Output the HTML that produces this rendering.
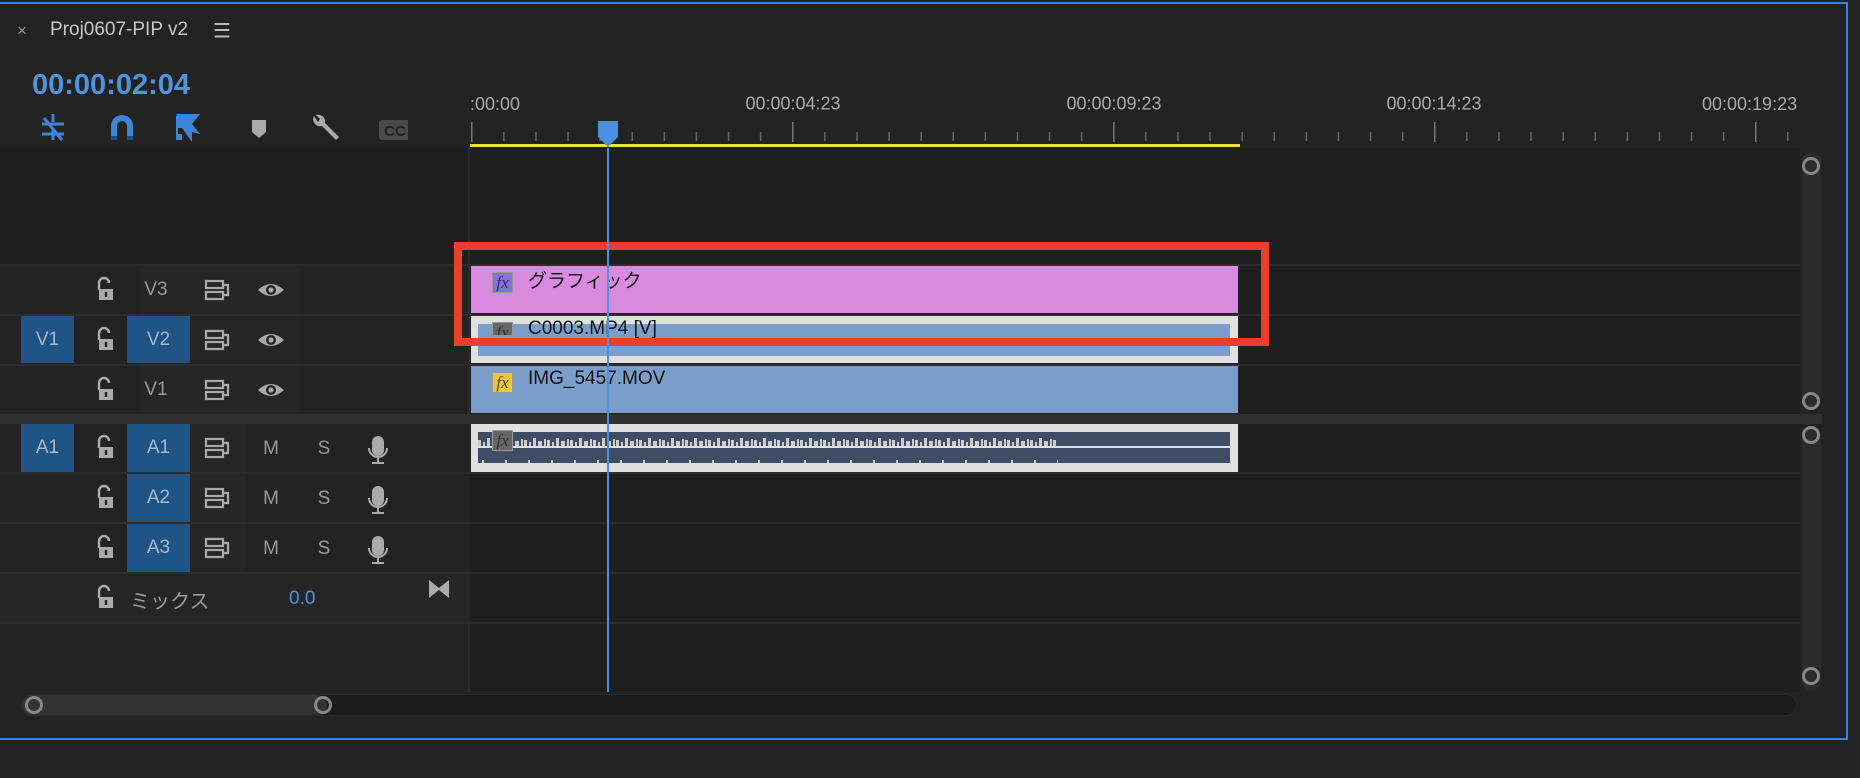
<!DOCTYPE html><html><head><meta charset="utf-8"><style>
*{margin:0;padding:0;box-sizing:border-box}
body{width:1860px;height:778px;background:#232323;position:relative;overflow:hidden;font-family:"Liberation Sans","Noto Sans CJK JP",sans-serif;color:#aaa}
.a{position:absolute}
.lbl{position:absolute;font-size:19px;color:#9a9a9a;transform:translate(-50%,-50%);white-space:nowrap}
.box{position:absolute;background:#1f5487;color:#aab8c8;font-size:19px;display:flex;align-items:center;justify-content:center}
.row{position:absolute;left:0;width:1800px;height:2px;background:#2c2c2c}
.fx{position:absolute;width:21px;height:21px;font-size:17px;font-style:italic;display:flex;align-items:center;justify-content:center;border:1px solid #999;font-family:"Liberation Serif",serif}
.cl{position:absolute;font-size:19px;color:#111}
.circ{position:absolute;width:18px;height:18px;border:3px solid #888;border-radius:50%}
</style></head><body>
<div class="a" style="left:0;top:2px;width:1848px;height:738px;border:2px solid #3d7fd0;border-left:none;"></div>
<div class="a" style="left:0;top:4px;width:1846px;height:734px;background:#232323"></div>
<div class="lbl" style="left:22px;top:31px;font-size:17px">×</div>
<div class="a" style="left:50px;top:19px;font-size:19px;color:#c8c8c8">Proj0607-PIP v2</div>
<div class="lbl" style="left:222px;top:31px;font-size:20px;color:#bbb">☰</div>
<div class="a" style="left:32px;top:69px;font-size:29px;font-weight:bold;color:#4d94dd">00:00:02:04</div>
<!-- toolbar icons -->
<svg class="a" style="left:38px;top:112px" width="370" height="32">
<g stroke="#3b86d9" stroke-width="3" fill="none"><path d="M15 2v8M4 12h22M4 22h22M6 6l18 22M15 18v10"/></g>
<path d="M73 28V14a11 11 0 0 1 22 0v14h-6V14a5 5 0 0 0-10 0v14z" fill="#3b86d9"/>
<rect x="73" y="24" width="6" height="4" fill="#1c4f88"/><rect x="89" y="24" width="6" height="4" fill="#1c4f88"/>
<path d="M138 2h24l-8 10 8 10-8-2v10l-10-14z" fill="#3b86d9"/><rect x="138" y="4" width="6" height="24" fill="#3b86d9"/><rect x="140" y="16" width="4" height="6" fill="#232323"/>
<path d="M214 8h14v12l-7 6-7-6z" fill="#aaa"/>
<path d="M276 4a7 7 0 0 0 8 10l14 14 3-3-14-14a7 7 0 0 0-9-8l4 4-2 3z" fill="#aaa"/>
<rect x="341" y="8" width="32" height="20" rx="3" fill="#4a4a4a"/><text x="357" y="24" font-size="15" font-weight="bold" fill="#232323" text-anchor="middle" font-family="Liberation Sans">CC</text>
</svg>
<!-- ruler -->
<div class="a" style="left:470px;top:94px;font-size:18px;color:#aaa">:00:00</div>
<div class="lbl" style="left:793px;top:104px;font-size:18px;color:#aaa">00:00:04:23</div>
<div class="lbl" style="left:1114px;top:104px;font-size:18px;color:#aaa">00:00:09:23</div>
<div class="lbl" style="left:1434px;top:104px;font-size:18px;color:#aaa">00:00:14:23</div>
<div class="a" style="left:1702px;top:94px;font-size:18px;color:#aaa;width:97px;overflow:hidden;white-space:nowrap">00:00:19:23</div>
<svg class="a" style="left:468px;top:118px" width="1332" height="32">
<defs><pattern id="t" x="3" y="0" width="32.1" height="32" patternUnits="userSpaceOnUse"><rect x="0" y="14" width="1.5" height="9" fill="#666"/></pattern></defs>
<rect x="0" y="0" width="1332" height="24" fill="url(#t)"/>
<g fill="#777"><rect x="3" y="4" width="1.5" height="20"/><rect x="324" y="4" width="1.5" height="20"/><rect x="645" y="4" width="1.5" height="20"/><rect x="966" y="4" width="1.5" height="20"/><rect x="1287" y="4" width="1.5" height="20"/></g>
<rect x="2" y="26" width="770" height="3" fill="#e8e03c"/>
</svg>
<!-- dark areas -->
<div class="a" style="left:0;top:148px;width:1800px;height:117px;background:#1e1e1e"></div>
<div class="a" style="left:470px;top:148px;width:1330px;height:544px;background:#1f1f1f"></div>
<div class="a" style="left:468px;top:148px;width:2px;height:544px;background:#2c2c2c"></div>
<div class="a" style="left:0;top:266px;width:300px;height:148px;background:#262626"></div>
<div class="a" style="left:0;top:424px;width:300px;height:150px;background:#262626"></div>
<div class="a" style="left:0;top:266px;width:140px;height:148px;background:#232323"></div>
<div class="a" style="left:0;top:424px;width:140px;height:150px;background:#232323"></div>
<div class="a" style="left:245px;top:424px;width:225px;height:150px;background:#232323"></div>
<div class="a" style="left:0;top:574px;width:470px;height:50px;background:#262626"></div>
<div class="row" style="top:264px"></div><div class="row" style="top:314px"></div><div class="row" style="top:364px"></div>
<div class="a" style="left:0;top:414px;width:1822px;height:10px;background:#303030"></div>
<div class="row" style="top:472px"></div><div class="row" style="top:522px"></div><div class="row" style="top:572px"></div><div class="row" style="top:622px"></div>
<!-- headers -->
<div class="box" style="left:21px;top:316px;width:53px;height:47px">V1</div>
<div class="box" style="left:127px;top:316px;width:63px;height:47px">V2</div>
<div class="lbl" style="left:156px;top:290px">V3</div>
<div class="lbl" style="left:156px;top:390px">V1</div>
<div class="box" style="left:21px;top:424px;width:53px;height:48px">A1</div>
<div class="box" style="left:127px;top:424px;width:63px;height:48px">A1</div>
<div class="box" style="left:127px;top:474px;width:63px;height:48px">A2</div>
<div class="box" style="left:127px;top:524px;width:63px;height:48px">A3</div>
<svg class="a" style="left:0;top:260px" width="470" height="360">
<defs>
<g id="lk"><path d="M-5 0v-7a5 5 0 0 1 10 0" stroke="#aaa" stroke-width="2.5" fill="none" transform="translate(-2,0)"/><rect x="-7" y="-1" width="14" height="11" fill="#aaa"/><rect x="-1.2" y="2" width="2.4" height="5" fill="#232323"/></g>
<g id="sy" fill="none" stroke="#aaa" stroke-width="2.2"><rect x="-11" y="-9" width="17" height="7"/><rect x="-11" y="2" width="17" height="7"/><path d="M6 -5h5v10h-5"/></g>
<g id="ey"><path d="M-13 0q13-12 26 0q-13 12-26 0z" fill="#aaa"/><circle r="5" fill="#262626"/><circle r="2.6" fill="#aaa"/></g>
<g id="mc"><rect x="-6" y="-14" width="12" height="20" rx="6" fill="#aaa"/><path d="M-9 -2a9 9 0 0 0 18 0M0 7v6M-6 13h12" stroke="#aaa" stroke-width="2" fill="none"/></g>
</defs>
<use href="#lk" x="106" y="30"/><use href="#lk" x="106" y="80"/><use href="#lk" x="106" y="130"/>
<use href="#lk" x="106" y="188"/><use href="#lk" x="106" y="238"/><use href="#lk" x="106" y="288"/><use href="#lk" x="106" y="338"/>
<use href="#sy" x="217" y="30"/><use href="#sy" x="217" y="80"/><use href="#sy" x="217" y="130"/>
<use href="#sy" x="217" y="188"/><use href="#sy" x="217" y="238"/><use href="#sy" x="217" y="288"/>
<use href="#ey" x="271" y="30"/><use href="#ey" x="271" y="80"/><use href="#ey" x="271" y="130"/>
<use href="#mc" x="378" y="190"/><use href="#mc" x="378" y="240"/><use href="#mc" x="378" y="290"/>
<path d="M429 320l10 8 10-8v18l-10-8-10 8z" fill="#aaa"/>
</svg>
<div class="lbl" style="left:271px;top:449px">M</div><div class="lbl" style="left:271px;top:499px">M</div><div class="lbl" style="left:271px;top:549px">M</div>
<div class="lbl" style="left:324px;top:449px">S</div><div class="lbl" style="left:324px;top:499px">S</div><div class="lbl" style="left:324px;top:549px">S</div>
<div class="a" style="left:130px;top:585px;font-size:20px;color:#9a9a9a">ミックス</div>
<div class="a" style="left:289px;top:588px;font-size:19px;color:#4d94dd">0.0</div>
<!-- clips -->
<div class="a" style="left:471px;top:266px;width:767px;height:47px;background:#d88ade"></div>
<div class="fx" style="left:492px;top:272px;background:#8a6fd6;color:#3a2a70">fx</div>
<div class="cl" style="left:528px;top:266px">グラフィック</div>
<div class="a" style="left:471px;top:316px;width:767px;height:47px;background:#e0e0e0"></div>
<div class="a" style="left:478px;top:324px;width:752px;height:32px;background:#7b9dc9"></div>
<div class="fx" style="left:492px;top:322px;background:#666;color:#333;height:14px;overflow:hidden;align-items:flex-start">fx</div>
<div class="cl" style="left:528px;top:318px;height:22px;overflow:hidden">C0003.MP4 [V]</div>
<div class="a" style="left:471px;top:366px;width:767px;height:47px;background:#7b9dc9"></div>
<div class="fx" style="left:492px;top:372px;background:#e8c840;color:#554400">fx</div>
<div class="cl" style="left:528px;top:368px">IMG_5457.MOV</div>
<div class="a" style="left:471px;top:424px;width:767px;height:48px;background:#e0e0e0"></div>
<div class="a" style="left:478px;top:432px;width:752px;height:14px;background:#3f4d66"></div>
<div class="a" style="left:478px;top:448px;width:752px;height:15px;background:#3f4d66"></div>
<svg class="a" style="left:478px;top:432px" width="600" height="32">
<defs><pattern id="w" width="23" height="32" patternUnits="userSpaceOnUse"><rect x="0" y="8" width="3" height="6" fill="#ccc"/><rect x="5" y="10" width="2" height="4" fill="#ccc"/><rect x="9" y="6" width="3" height="8" fill="#ccc"/><rect x="14" y="9" width="4" height="5" fill="#ccc"/><rect x="20" y="7" width="2" height="7" fill="#ccc"/><rect x="4" y="28" width="2" height="3" fill="#ccc"/></pattern></defs>
<rect width="580" height="32" fill="url(#w)"/></svg>
<div class="fx" style="left:492px;top:430px;background:#666;color:#333">fx</div>
<!-- red box -->
<div class="a" style="left:454px;top:242px;width:815px;height:104px;border:8px solid #e8402a"></div>
<!-- playhead -->
<div class="a" style="left:607px;top:148px;width:2px;height:544px;background:#4a8fe0"></div>
<svg class="a" style="left:597px;top:120px" width="22" height="28"><path d="M1 1h20v16l-10 10-10-10z" fill="#4a8fe0"/></svg>
<!-- scrollbars -->
<div class="a" style="left:1802px;top:152px;width:19px;height:258px;background:#2c2c2c;border-radius:9px"></div>
<div class="a" style="left:1802px;top:426px;width:19px;height:264px;background:#2c2c2c;border-radius:9px"></div>
<div class="circ" style="left:1802px;top:157px"></div><div class="circ" style="left:1802px;top:392px"></div>
<div class="circ" style="left:1802px;top:426px"></div><div class="circ" style="left:1802px;top:667px"></div>
<div class="a" style="left:21px;top:694px;width:1776px;height:22px;background:#1c1c1c;border:1px solid #2a2a2a;border-radius:11px"></div>
<div class="a" style="left:22px;top:695px;width:305px;height:20px;background:#333;border-radius:10px"></div>
<div class="circ" style="left:25px;top:696px"></div><div class="circ" style="left:314px;top:696px"></div>
</body></html>
